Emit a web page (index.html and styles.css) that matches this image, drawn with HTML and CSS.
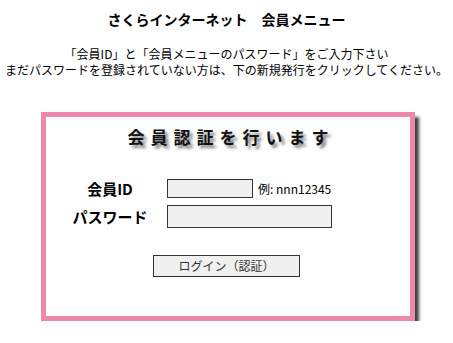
FILE: index.html
```html
<!DOCTYPE html>
<html lang="ja">
<head>
<meta charset="utf-8">
<title>会員メニュー</title>
<link rel="stylesheet" href="styles.css">
</head>
<body>
<h1 class="site-title">さくらインターネット　会員メニュー</h1>
<p class="intro">「会員ID」と「会員メニューのパスワード」をご入力下さい<br>まだパスワードを登録されていない方は、下の新規発行をクリックしてください。</p>
<form class="auth-box">
  <h2 class="auth-title">会員認証を行います</h2>
  <div class="auth-grid">
    <label class="auth-label" for="mid">会員ID</label>
    <div class="auth-field">
      <input class="auth-input auth-input-id" id="mid" type="text">
      <span class="auth-hint">例: nnn12345</span>
    </div>
    <label class="auth-label" for="mpw">パスワード</label>
    <div class="auth-field">
      <input class="auth-input auth-input-pw" id="mpw" type="password">
    </div>
  </div>
  <div class="auth-actions">
    <button class="auth-button" type="button">ログイン（認証）</button>
  </div>
</form>
</body>
</html>
```
FILE: styles.css
```css
html, body {
  margin: 0;
  padding: 0;
  background: #ffffff;
}
body {
  font-family: "Noto Sans CJK JP", "Noto Sans", sans-serif;
  color: #000;
  width: 453px;
}
.site-title {
  margin: 0;
  padding-top: 9px;
  font-size: 14px;
  line-height: 20px;
  font-weight: bold;
  text-align: center;
}
.intro {
  margin: 17px 0 0;
  font-size: 12px;
  line-height: 16px;
  text-align: center;
}
.auth-box {
  box-sizing: border-box;
  margin: 34px 0 0 41px;
  width: 374px;
  height: 209px;
  border: 5px solid #ee88aa;
  background: #fff;
  box-shadow: 4px 5px 3px rgba(0, 0, 0, 0.75);
  display: flex;
  flex-direction: column;
}
.auth-title {
  margin: 8px 0 0;
  font-size: 17px;
  line-height: 24px;
  font-weight: bold;
  letter-spacing: 6px;
  padding-left: 6px;
  text-align: center;
  color: #111;
  text-shadow: 3px 3px 3px rgba(0, 0, 0, 0.5);
}
.auth-grid {
  margin: 30px 0 0 24px;
  display: grid;
  grid-template-columns: 80px auto;
  column-gap: 17px;
  row-gap: 7px;
  align-items: center;
}
.auth-label {
  text-align: center;
  font-size: 15px;
  font-weight: bold;
  line-height: 19px;
}
.auth-field {
  display: flex;
  align-items: center;
  gap: 5px;
}
.auth-input {
  box-sizing: border-box;
  margin: 0;
  padding: 0 3px;
  border: 1px solid #333;
  background: #f0f0f0;
  font-size: 12px;
}
.auth-input-id {
  width: 86px;
  height: 19px;
}
.auth-input-pw {
  width: 165px;
  height: 23px;
}
.auth-hint {
  font-size: 12px;
  line-height: 16px;
}
.auth-actions {
  margin-top: 27px;
  display: flex;
  justify-content: center;
}
.auth-button {
  box-sizing: border-box;
  width: 147px;
  height: 22px;
  margin: 0 0 0 -3px;
  padding: 0;
  border: 1px solid #333;
  background: #f0f0f0;
  color: #333;
  font-family: "Noto Sans CJK JP", sans-serif;
  font-size: 12px;
  line-height: 20px;
}
```
